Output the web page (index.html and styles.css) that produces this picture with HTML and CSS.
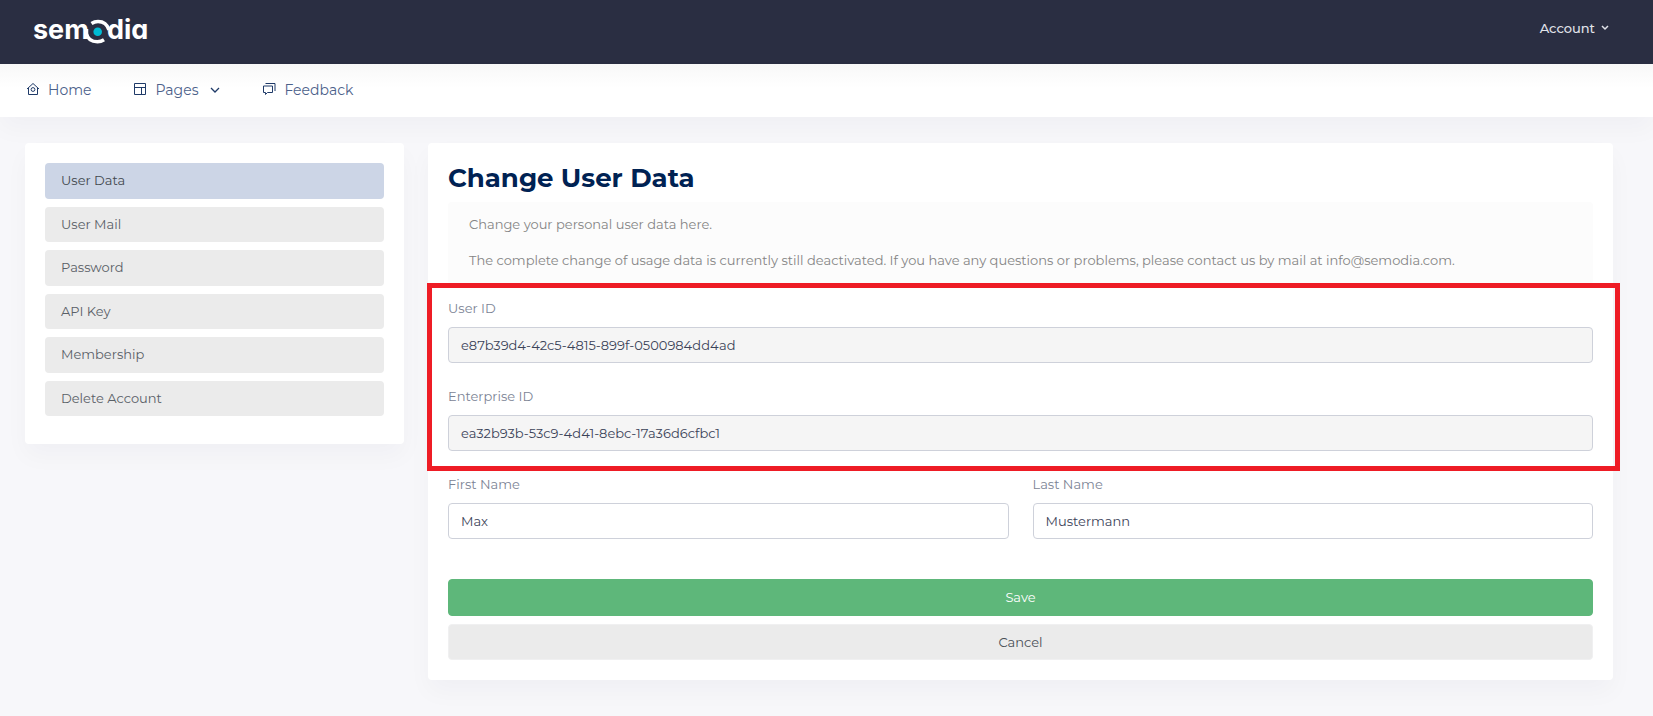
FILE: index.html
```html
<!DOCTYPE html>
<html lang="en">
<head>
<meta charset="utf-8">
<meta name="viewport" content="width=device-width, initial-scale=1">
<title>Change User Data</title>
<link rel="stylesheet" href="styles.css">
</head>
<body>
<header class="topbar">
  <a class="logo" href="#">
    <svg width="116" height="32" viewBox="32 14 116 32" role="img" aria-label="semodia">
      <text class="logo-text" x="33" y="39">sem</text>
      <text class="logo-text" x="107" y="39">dia</text>
      <path class="logo-ring" d="M86.500 29v4.500c1 5 5 8.300 11 8.300q3.500 0 6.500-2"/>
      <path class="logo-ring" d="M91.500 23.500q3-2 6.500-2c5.500 0 9.500 3.500 11 8.500"/>
      <circle cx="97.700" cy="31.700" r="4.300" fill="#00bcd4"/>
    </svg>
  </a>
  <button class="account" type="button">Account
    <svg width="8" height="6" viewBox="0 0 8 6"><path d="M1 1l3 3 3-3"/></svg>
  </button>
</header>
<nav class="nav">
  <a class="nav-link" href="#">
    <svg class="nav-icon" width="14" height="14" viewBox="0 0 14 14"><path d="M1 7L7 1.500l6 5.500M2.500 6v6.500h9V6"/><circle cx="7" cy="7.500" r="1.900"/></svg>
    Home
  </a>
  <a class="nav-link" href="#">
    <svg class="nav-icon" width="14" height="14" viewBox="0 0 14 14"><path d="M1.500 1.500h11v11h-11zM1.500 5.500h11M8.500 5.500v7"/></svg>
    Pages
    <svg class="nav-chevron" width="10" height="6" viewBox="0 0 10 6"><path d="M1 1l4 4 4-4"/></svg>
  </a>
  <a class="nav-link" href="#">
    <svg class="nav-icon" width="14" height="14" viewBox="0 0 14 14"><path d="M1.500 4h9v6.500H5.500L3.500 12.500v-2h-2zM3.500 1.500h9.500V9"/></svg>
    Feedback
  </a>
</nav>
<main class="page">
  <aside class="card side">
    <a class="side-link active" href="#">User Data</a>
    <a class="side-link" href="#">User Mail</a>
    <a class="side-link" href="#">Password</a>
    <a class="side-link" href="#">API Key</a>
    <a class="side-link" href="#">Membership</a>
    <a class="side-link" href="#">Delete Account</a>
  </aside>
  <section class="card content">
    <h1 class="title">Change User Data</h1>
    <div class="info">
      <p>Change your personal user data here.</p>
      <p>The complete change of usage data is currently still deactivated. If you have any questions or problems, please contact us by mail at info@semodia.com.</p>
    </div>
    <form class="form">
      <div class="highlight">
        <div class="field">
          <label for="user-id">User ID</label>
          <input id="user-id" type="text" value="e87b39d4-42c5-4815-899f-0500984dd4ad" readonly>
        </div>
        <div class="field">
          <label for="enterprise-id">Enterprise ID</label>
          <input id="enterprise-id" type="text" value="ea32b93b-53c9-4d41-8ebc-17a36d6cfbc1" readonly>
        </div>
      </div>
      <div class="names">
        <div class="field">
          <label for="first-name">First Name</label>
          <input id="first-name" type="text" value="Max">
        </div>
        <div class="field">
          <label for="last-name">Last Name</label>
          <input id="last-name" type="text" value="Mustermann">
        </div>
      </div>
      <div class="actions">
        <button class="btn save" type="submit">Save</button>
        <button class="btn cancel" type="button">Cancel</button>
      </div>
    </form>
  </section>
</main>
</body>
</html>
```
FILE: styles.css
```css
* { box-sizing: border-box; }

body {
  margin: 0;
  background: #f7f7fa;
  color: #5a6067;
  font: 13px/20px Montserrat, Inter, "Open Sans", sans-serif;
}

a { color: inherit; text-decoration: none; }
svg { fill: none; stroke: currentColor; }

.topbar {
  display: flex;
  justify-content: space-between;
  align-items: flex-start;
  height: 64px;
  padding: 14px 44px 0 32px;
  background: #2a2e42;
}

.logo { display: flex; color: #fff; }
.logo-text { font: 700 27px Inter, sans-serif; font-feature-settings: "cv11"; fill: #fff; stroke: none; }
.logo-ring { stroke-width: 3.500; }
.logo circle { stroke: none; }

.account {
  display: flex;
  align-items: center;
  gap: 6px;
  padding: 4px 0;
  border: 0;
  background: none;
  color: #e1e3ea;
  font: inherit;
  font-weight: 500;
}
.account svg { stroke-width: 1.500; }

.nav {
  position: relative;
  display: flex;
  gap: 42px;
  height: 53px;
  padding: 16px 26px;
  background: linear-gradient(#f8f8f8, #fff 24px);
  box-shadow: 0 12px 24px rgba(18, 18, 63, .03);
  color: #4c618a;
  font-size: 14px;
}
.nav-link { display: flex; align-items: center; gap: 8px; height: 20px; }
.nav-icon { margin-bottom: 3px; color: #1f3a68; }
.nav-chevron { margin-left: 4px; color: #1f3a68; stroke-width: 1.300; }

.page {
  display: grid;
  grid-template-columns: minmax(0, 379fr) minmax(0, 1185fr);
  gap: 24px;
  align-items: start;
  padding: 26px 40px 36px 25px;
}
.card {
  padding: 20px;
  border-radius: 4px;
  background: #fff;
  box-shadow: 0 12px 24px rgba(18, 18, 63, .03);
}

.side { display: flex; flex-direction: column; gap: 8px; padding-bottom: 28px; }
.side-link {
  padding: 8px 16px;
  border-radius: 4px;
  background: #ebebeb;
  line-height: 1.5;
}
.side-link.active { background: #ccd5e6; color: #43494f; }

.title { margin: 0; color: #002253; font-size: 26px; font-weight: 700; line-height: 30px; }

.info {
  margin: 9px 0 14px;
  padding: 12px 21px 14px;
  border-radius: 4px;
  background: #fcfcfc;
  color: #858585;
}
.info p { margin: 0 0 16px; }
.info p:last-child { margin: 0; }

.form { display: grid; gap: 23px; }
.highlight { position: relative; display: grid; gap: 23px; }
.highlight::after {
  content: "";
  position: absolute;
  inset: -15px -27px -20px -21px;
  border: 5px solid #ee1c25;
  pointer-events: none;
}
.names { display: grid; grid-template-columns: 1fr 1fr; gap: 24px; }

.field { display: grid; gap: 9px; }
.field label { color: #7c8495; }
.field input {
  width: 100%;
  height: 36px;
  padding: 0 12px;
  border: 1px solid #ced1da;
  border-radius: 4px;
  background: #fff;
  color: #3b4358;
  font: inherit;
}
.field input[readonly] { background: #f5f5f5; }

.actions { display: grid; gap: 8px; margin-top: 17px; }
.btn {
  padding: 7px 12px;
  border: 1px solid #f0f0f1;
  border-radius: 4px;
  background: #ebebeb;
  color: #495057;
  font: inherit;
}
.btn.save { padding-bottom: 8px; border-color: #5eb77a; background: #5eb77a; color: #fff; }
```
